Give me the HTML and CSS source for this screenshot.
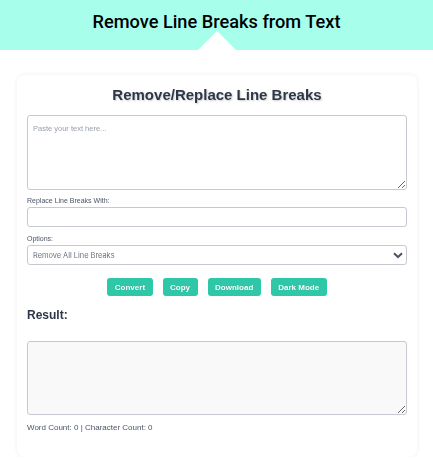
FILE: index.html
```html
<!DOCTYPE html>
<html lang="en">
<head>
    <meta charset="UTF-8">
    <meta name="viewport" content="width=device-width, initial-scale=1.0">
    <title>Remove Line Breaks from Text</title>
    <link rel="stylesheet" href="styles.css">
</head>
<body>
    <!-- Page Banner -->
    <header class="banner">
        <h1>Remove Line Breaks from Text</h1>
        <div class="banner-arrow"></div>
    </header>

    <!-- Tool Card -->
    <main class="card">
        <h2 class="card-title">Remove/Replace Line Breaks</h2>
        <textarea class="text-box input-box" placeholder="Paste your text here..."></textarea>

        <label class="field-label" for="replace">Replace Line Breaks With:</label>
        <input class="text-input" id="replace" type="text">

        <label class="field-label options-label" for="options">Options:</label>
        <select class="select-input" id="options">
            <option>Remove All Line Breaks</option>
        </select>

        <div class="action-buttons">
            <button class="action-btn">Convert</button>
            <button class="action-btn">Copy</button>
            <button class="action-btn">Download</button>
            <button class="action-btn">Dark Mode</button>
        </div>

        <h3 class="result-title">Result:</h3>
        <textarea class="text-box result-box" readonly></textarea>
        <p class="count-line">Word Count: 0 | Character Count: 0</p>
    </main>
</body>
</html>
```

FILE: styles.css
```css
* {
    margin: 0;
    padding: 0;
    box-sizing: border-box;
    font-family: 'Liberation Sans', Arial, sans-serif;
}

body {
    background-color: #fff;
    color: #2d3748;
}

/* Banner */
.banner {
    position: relative;
    height: 50px;
    background-color: #a7ffeb;
    display: flex;
    justify-content: center;
    padding-top: 10px;
}

.banner h1 {
    font-family: Roboto, sans-serif;
    font-size: 18.2px;
    font-weight: 500;
    line-height: 24px;
    color: #000;
}

.banner-arrow {
    position: absolute;
    left: 198px;
    bottom: 0;
    width: 38px;
    height: 19px;
    background-color: #fff;
    clip-path: polygon(50% 0, 100% 100%, 0 100%);
}

/* Card */
.card {
    width: 400px;
    height: 382px;
    margin: 25px 0 0 17px;
    padding: 11px 10px 10px;
    background: #fff;
    border-radius: 8px;
    box-shadow: 0 0 5px rgba(0, 0, 0, 0.07);
    will-change: transform;
}

.card-title {
    font-size: 15px;
    font-weight: 700;
    line-height: 18px;
    text-align: center;
    color: #2d3748;
    text-shadow: 1px 1px 2px rgba(0, 0, 0, 0.2);
    margin-bottom: 11px;
}

.text-box {
    display: block;
    width: 100%;
    padding: 8px 5px;
    font-size: 7.5px;
    border: 1px solid #c8c8d0;
    border-radius: 3px;
    background: #fff;
    outline: none;
}

.text-box::placeholder {
    color: #9aa0aa;
}

.input-box {
    height: 75px;
}

.result-box {
    height: 74px;
    background: #f9f9f9;
}

.field-label {
    display: block;
    font-size: 7px;
    line-height: 9px;
    color: #4a5568;
    margin: 6px 0 2px;
}

.options-label {
    margin-top: 7px;
}

.text-input,
.select-input {
    display: block;
    width: 100%;
    height: 20px;
    border: 1px solid #c8c8d0;
    border-radius: 3px;
    background-color: #fff;
    outline: none;
}

.select-input {
    appearance: none;
    padding-left: 5px;
    font-family: Inter, sans-serif;
    font-size: 7.4px;
    color: #6b7280;
    background-image: url("data:image/svg+xml,%3Csvg xmlns='http://www.w3.org/2000/svg' width='10' height='7' viewBox='0 0 10 7'%3E%3Cpath d='M1 1.2l4 3.8 4-3.8' fill='none' stroke='%234a5568' stroke-width='2'/%3E%3C/svg%3E");
    background-repeat: no-repeat;
    background-position: right 3px center;
}

.action-buttons {
    display: flex;
    justify-content: center;
    gap: 10px;
    margin-top: 13px;
}

.action-btn {
    height: 18px;
    padding: 0 7.5px;
    border: none;
    border-radius: 3px;
    background-color: #2ec8a8;
    color: #fff;
    font-size: 8px;
    font-weight: 700;
    text-shadow: 0 0 1px rgba(0, 0, 0, 0.2);
}

.result-title {
    font-size: 12px;
    font-weight: 700;
    line-height: 14px;
    margin: 12px 0 19px;
    color: #2d3748;
}

.count-line {
    font-size: 8px;
    line-height: 10px;
    margin-top: 8px;
    color: #4a5568;
}
```
